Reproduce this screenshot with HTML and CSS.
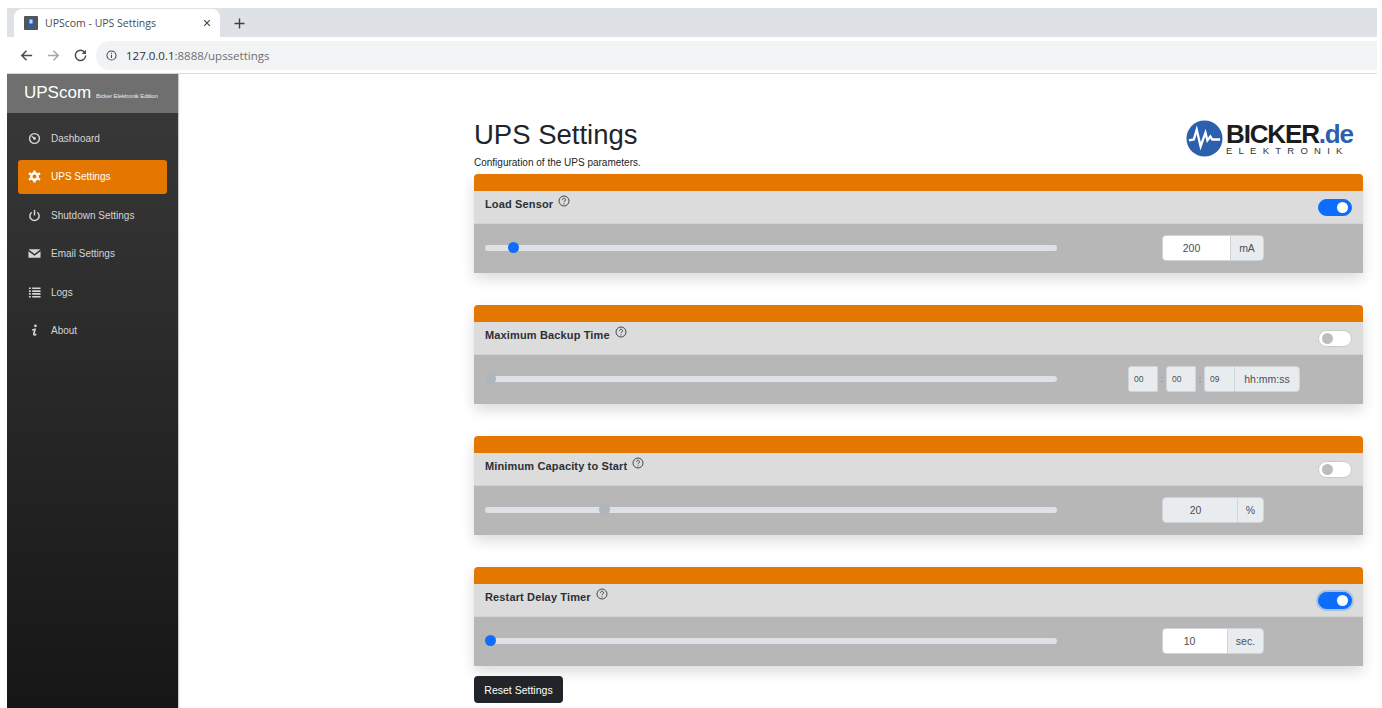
FILE: index.html
```html
<!DOCTYPE html>
<html lang="en">
<head>
<meta charset="utf-8">
<title>UPScom - UPS Settings</title>
<link rel="stylesheet" href="styles.css">
</head>
<body>
<div class="window">
  <div class="tabstrip">
    <div class="tab">
      <svg class="favicon" viewBox="0 0 14 14"><rect width="14" height="14" rx="1" fill="#555"/><rect x="4" y="2" width="6" height="10" rx="1" transform="rotate(8 7 7)" fill="#2a5fa8"/><rect x="5.5" y="3.5" width="3" height="4" fill="#c9d6e6"/></svg>
      <span class="tab-title">UPScom - UPS Settings</span>
      <svg class="tab-close" viewBox="0 0 10 10"><path d="M1.5 1.5l7 7M8.500 1.500l-7 7" stroke="#45484c" stroke-width="1.500" fill="none"/></svg>
    </div>
    <svg class="tab-new" viewBox="0 0 12 12"><path d="M6 .5v11M.5 6h11" stroke="#3c4043" stroke-width="1.500" fill="none"/></svg>
  </div>
  <div class="toolbar">
    <svg class="nav-icon" viewBox="0 0 16 16"><path d="M14 8H3M8 3L3 8l5 5" stroke="#4a4d51" stroke-width="1.600" fill="none"/></svg>
    <svg class="nav-icon" viewBox="0 0 16 16"><path d="M2 8h11M8 3l5 5-5 5" stroke="#a3a6aa" stroke-width="1.600" fill="none"/></svg>
    <svg class="nav-icon" viewBox="0 0 16 16"><path d="M12.800 5.200A5.500 5.500 0 1 0 13.500 8" stroke="#4a4d51" stroke-width="1.600" fill="none"/><path d="M13.800 1.800v4.500H9.300z" fill="#4a4d51"/></svg>
    <div class="omnibox">
      <svg class="info-icon" viewBox="0 0 12 12"><circle cx="6" cy="6" r="5" fill="none" stroke="#45484c" stroke-width="1.100"/><path d="M6 5.200v3.600M6 3v1.200" stroke="#45484c" stroke-width="1.200"/></svg>
      <span class="url"><span class="url-host">127.0.0.1</span>:8888/upssettings</span>
    </div>
  </div>
  <div class="app">
    <nav class="sidebar">
      <div class="brand"><span class="brand-name">UPScom</span><span class="brand-sub">Bicker Elektronik Edition</span></div>
      <ul class="menu">
        <li class="menu-item">
          <svg class="menu-icon" viewBox="0 0 14 14"><circle cx="7" cy="7" r="5.300" fill="none" stroke="currentColor" stroke-width="1.500"/><circle cx="7" cy="7" r="1.500" fill="currentColor"/><path d="M4 4.500l3 2.500" stroke="currentColor" stroke-width="1.300"/></svg>
          Dashboard
        </li>
        <li class="menu-item active">
          <svg class="menu-icon" viewBox="0 0 14 14"><circle cx="7" cy="7" r="3.500" fill="none" stroke="currentColor" stroke-width="2.600"/><g stroke="currentColor" stroke-width="2.400"><path d="M7 .5v2.500M7 11v2.500M1 3.500l2.200 1.300M10.800 9.200L13 10.500M1 10.500l2.200-1.300M10.800 4.800L13 3.500"/></g></svg>
          UPS Settings
        </li>
        <li class="menu-item">
          <svg class="menu-icon" viewBox="0 0 14 14"><path d="M4 3.500a5 5 0 1 0 6 0" fill="none" stroke="currentColor" stroke-width="1.600"/><path d="M7 1v6" stroke="currentColor" stroke-width="1.600"/></svg>
          Shutdown Settings
        </li>
        <li class="menu-item">
          <svg class="menu-icon" viewBox="0 0 14 14"><path d="M.5 2.500h13L7 7.500z" fill="currentColor"/><path d="M.5 4.500L7 9.500l6.500-5v7H.5z" fill="currentColor"/></svg>
          Email Settings
        </li>
        <li class="menu-item">
          <svg class="menu-icon" viewBox="0 0 14 14"><path d="M1 2.500h2M4.500 2.500h9M1 5.500h2M4.500 5.500h9M1 8.500h2M4.500 8.500h9M1 11.500h2M4.500 11.500h9" stroke="currentColor" stroke-width="1.700"/></svg>
          Logs
        </li>
        <li class="menu-item">
          <svg class="menu-icon" viewBox="0 0 14 14"><circle cx="8" cy="2" r="1.500" fill="currentColor"/><path d="M4.500 6.500l3-.7-1.200 5c-.2 1 .8 1.200 2.700.2" fill="none" stroke="currentColor" stroke-width="1.800"/></svg>
          About
        </li>
      </ul>
    </nav>
    <main class="content">
      <header class="page-head">
        <div class="page-titles">
          <h1 class="page-title">UPS Settings</h1>
          <p class="page-desc">Configuration of the UPS parameters.</p>
        </div>
        <div class="logo">
          <svg class="logo-mark" viewBox="0 0 38 38"><circle cx="19" cy="19" r="18.500" fill="#2c5fae"/><path d="M3 21l5-1 3-10 4 17 5-14 2 8 3-4 2 3h8" fill="none" stroke="#fff" stroke-width="2.400"/></svg>
          <div class="logo-text">
            <div class="logo-word">BICKER<span class="logo-tld">.de</span></div>
            <div class="logo-sub">ELEKTRONIK</div>
          </div>
        </div>
      </header>

      <section class="card">
        <div class="card-stripe"></div>
        <div class="card-head">
          <span class="card-label">Load Sensor</span>
          <svg class="help" viewBox="0 0 12 12"><circle cx="6" cy="6" r="5" fill="none" stroke="#33383d" stroke-width=".9"/><path d="M4.500 4.700a1.500 1.500 0 1 1 2.300 1.300c-.6.400-.8.600-.8 1.200" fill="none" stroke="#33383d" stroke-width=".9"/><circle cx="6" cy="8.800" r=".6" fill="#33383d"/></svg>
          <span class="switch on"></span>
        </div>
        <div class="card-body">
          <div class="slider"><span class="thumb" style="left:4%"></span></div>
          <div class="field field-load">
            <div class="group">
              <span class="value v-load">200</span><span class="unit">mA</span>
            </div>
          </div>
        </div>
      </section>

      <section class="card">
        <div class="card-stripe"></div>
        <div class="card-head">
          <span class="card-label">Maximum Backup Time</span>
          <svg class="help" viewBox="0 0 12 12"><circle cx="6" cy="6" r="5" fill="none" stroke="#33383d" stroke-width=".9"/><path d="M4.500 4.700a1.500 1.500 0 1 1 2.300 1.300c-.6.400-.8.600-.8 1.200" fill="none" stroke="#33383d" stroke-width=".9"/><circle cx="6" cy="8.800" r=".6" fill="#33383d"/></svg>
          <span class="switch"></span>
        </div>
        <div class="card-body off">
          <div class="slider"><span class="thumb" style="left:0"></span></div>
          <div class="field field-time">
            <span class="time-cell">00</span><span class="colon">:</span><span class="time-cell">00</span><span class="colon">:</span><span class="time-cell last">09</span><span class="unit time-unit">hh:mm:ss</span>
          </div>
        </div>
      </section>

      <section class="card">
        <div class="card-stripe"></div>
        <div class="card-head">
          <span class="card-label">Minimum Capacity to Start</span>
          <svg class="help" viewBox="0 0 12 12"><circle cx="6" cy="6" r="5" fill="none" stroke="#33383d" stroke-width=".9"/><path d="M4.500 4.700a1.500 1.500 0 1 1 2.300 1.300c-.6.400-.8.600-.8 1.200" fill="none" stroke="#33383d" stroke-width=".9"/><circle cx="6" cy="8.800" r=".6" fill="#33383d"/></svg>
          <span class="switch"></span>
        </div>
        <div class="card-body off">
          <div class="slider"><span class="thumb" style="left:20%"></span></div>
          <div class="field field-load">
            <div class="group">
              <span class="value v-cap">20</span><span class="unit">%</span>
            </div>
          </div>
        </div>
      </section>

      <section class="card">
        <div class="card-stripe"></div>
        <div class="card-head">
          <span class="card-label">Restart Delay Timer</span>
          <svg class="help" viewBox="0 0 12 12"><circle cx="6" cy="6" r="5" fill="none" stroke="#33383d" stroke-width=".9"/><path d="M4.500 4.700a1.500 1.500 0 1 1 2.300 1.300c-.6.400-.8.600-.8 1.200" fill="none" stroke="#33383d" stroke-width=".9"/><circle cx="6" cy="8.800" r=".6" fill="#33383d"/></svg>
          <span class="switch on focus"></span>
        </div>
        <div class="card-body">
          <div class="slider"><span class="thumb" style="left:0"></span></div>
          <div class="field field-load">
            <div class="group">
              <span class="value v-delay">10</span><span class="unit">sec.</span>
            </div>
          </div>
        </div>
      </section>

      <button class="reset" type="button">Reset Settings</button>
    </main>
  </div>
</div>
</body>
</html>
```
FILE: styles.css
```css
* { box-sizing: border-box; }

html, body { height: 100%; }

body {
  margin: 0;
  background: #fff;
  overflow: hidden;
  font-family: "Liberation Sans", Arial, sans-serif;
  color: #212529;
}

.window {
  height: 708px;
  margin: 0 5px 0 7px;
  padding-top: 8px;
  display: flex;
  flex-direction: column;
}

/* Browser tab strip */
.tabstrip {
  height: 29px;
  flex: none;
  display: flex;
  align-items: flex-end;
  background: #dee1e6;
}

.tab {
  width: 206px;
  height: 28px;
  margin-left: 7px;
  padding: 0 0 1px 10px;
  display: flex;
  align-items: center;
  background: #fff;
  border-radius: 8px 8px 0 0;
}

.favicon { width: 14px; height: 14px; margin-right: 7px; }

.tab-title {
  flex: 1;
  font: 10.500px "Open Sans", "Liberation Sans", sans-serif;
  color: #4a4d52;
}

.tab-close { width: 8px; height: 8px; margin-right: 9px; }

.tab-new { width: 11px; height: 11px; margin: 0 0 8px 14px; }

/* Address bar */
.toolbar {
  height: 37px;
  flex: none;
  padding-left: 12px;
  display: flex;
  align-items: center;
  background: #fff;
  border-bottom: 1px solid #dadce0;
}

.nav-icon { width: 15px; height: 15px; margin-right: 12px; }

.omnibox {
  flex: 1;
  height: 29px;
  margin: 0 0 0 -4px;
  padding-left: 10px;
  display: flex;
  align-items: center;
  background: #f1f3f4;
  border-radius: 14px 0 0 14px;
}

.info-icon { width: 11px; height: 11px; margin-right: 9px; }

.url { font: 11.500px "Open Sans", "Liberation Sans", sans-serif; color: #6d7175; }

.url-host { color: #2e3033; }

/* Application frame */
.app {
  flex: 1;
  min-height: 0;
  display: flex;
}

.sidebar {
  width: 171px;
  flex: none;
  background: linear-gradient(#3a3a3a, #161616);
  box-shadow: 1px 0 1px rgba(0, 0, 0, .2);
}

.brand {
  height: 39px;
  padding: 0 0 1px 17px;
  display: flex;
  align-items: center;
  background: #6f6f6f;
  color: #fff;
}

.brand-name { font-size: 17px; }

.brand-sub {
  margin: 5px 0 0 5px;
  font-size: 6px;
  letter-spacing: -.12px;
  color: #ececec;
}

.menu {
  list-style: none;
  margin: 0;
  padding: 8px 11px 0;
}

.menu-item {
  height: 34px;
  margin-bottom: 4.500px;
  padding-left: 10px;
  display: flex;
  align-items: center;
  border-radius: 3px;
  font-size: 10px;
  color: #d3d5d7;
}

.menu-item.active {
  background: #e47700;
  color: #fff;
}

.menu-icon {
  width: 13px;
  height: 13px;
  margin-right: 10px;
  flex: none;
}

/* Page content */
.content {
  flex: 1;
  min-width: 0;
  padding: 35px 14px 0 296px;
  display: flex;
  flex-direction: column;
}

.page-head {
  height: 65px;
  flex: none;
  display: flex;
  justify-content: space-between;
}

.page-title {
  margin: 10px 0 0;
  font-size: 27.500px;
  line-height: 32px;
  font-weight: 400;
}

.page-desc {
  margin: 6px 0 0;
  font-size: 10px;
  line-height: 12px;
}

.logo {
  width: 177px;
  height: 38px;
  margin-top: 10px;
  display: flex;
  align-items: center;
  gap: 3px;
}

.logo-mark { width: 37px; height: 37px; flex: none; }

.logo-text { flex: 1; }

.logo-word {
  font-size: 26px;
  line-height: 26px;
  font-weight: 700;
  letter-spacing: -1.150px;
  color: #1c1c1c;
}

.logo-tld { color: #2c5fae; }

.logo-sub {
  margin-top: -1px;
  font-size: 9.500px;
  line-height: 10px;
  letter-spacing: 6.250px;
  white-space: nowrap;
  color: #333;
}

/* Setting cards */
.card {
  height: 99px;
  flex: none;
  margin-bottom: 32px;
  border-radius: 4px 4px 0 0;
  box-shadow: 0 6px 14px rgba(0, 0, 0, .14);
}

.card:nth-of-type(4) { margin-bottom: 10px; }

.card-stripe {
  height: 17px;
  background: #e47700;
  border-radius: 4px 4px 0 0;
}

.card-head {
  height: 33px;
  padding: 0 11px;
  position: relative;
  display: flex;
  align-items: flex-start;
  background: #dcdcdc;
  border-bottom: 1px solid #d2d2d2;
}

.card-label {
  margin-top: 7px;
  font-size: 11px;
  line-height: 13px;
  font-weight: 700;
  letter-spacing: .14px;
  color: #2b3035;
}

.help {
  width: 12px;
  height: 12px;
  margin: 4px 0 0 5px;
}

.switch {
  width: 34px;
  height: 17px;
  margin: 8px 0 0 auto;
  position: relative;
  border-radius: 9px;
  background: #fff;
  border: 1px solid #c9c9c9;
}

.switch::after {
  content: "";
  position: absolute;
  left: 3px;
  top: 2px;
  width: 11px;
  height: 11px;
  border-radius: 50%;
  background: #bdbdbd;
}

.switch.on {
  background: #0d6efd;
  border-color: #0d6efd;
}

.switch.on::after {
  left: auto;
  right: 3px;
  background: #fff;
}

.switch.focus { box-shadow: 0 0 0 2px rgba(13, 110, 253, .25); }

.card-body {
  height: 49px;
  padding: 0 0 0 11px;
  display: flex;
  align-items: center;
  background: #b7b7b7;
}

.slider {
  width: 572px;
  height: 6px;
  margin-top: -2px;
  flex: none;
  position: relative;
  background: #dee2e6;
  border-radius: 3px;
}

.thumb {
  position: absolute;
  top: -2.500px;
  width: 11px;
  height: 11px;
  border-radius: 50%;
  background: #0d6efd;
}

.card-body.off .thumb { background: #adb5bd; }

.field {
  display: flex;
  align-items: center;
  margin-top: -1px;
  font-size: 10.500px;
}

.field-load { margin-left: 105px; }

.field-time { margin-left: 71px; }

.group {
  width: 102px;
  height: 26px;
  display: flex;
  border-radius: 4px;
  overflow: hidden;
  border: 1px solid #ced4da;
}

.value {
  display: flex;
  align-items: center;
  justify-content: center;
  background: #fff;
  font-size: 10.500px;
  color: #495057;
}

.v-load { width: 67px; padding-right: 10px; }

.v-cap { width: 74px; background: #e9ecef; padding-right: 9px; }

.v-delay { width: 64px; padding-right: 11px; }

.unit {
  flex: 1;
  display: flex;
  align-items: center;
  justify-content: center;
  background: #e9ecef;
  border-left: 1px solid #ced4da;
  color: #495057;
}

.time-cell {
  width: 30px;
  height: 26px;
  display: flex;
  align-items: center;
  padding-left: 5px;
  background: #e9ecef;
  border: 1px solid #ced4da;
  border-radius: 3px 0 0 3px;
  font-size: 8.500px;
  color: #495057;
}

.time-cell.last { border-right: 0; }

.colon {
  width: 8px;
  text-align: center;
  font-size: 9px;
  color: #777;
}

.time-unit {
  width: 66px;
  height: 26px;
  flex: none;
  border: 1px solid #ced4da;
  border-radius: 0 4px 4px 0;
}

.reset {
  width: 89px;
  height: 27px;
  flex: none;
  padding: 0;
  border: 0;
  border-radius: 4px;
  background: #212529;
  color: #fff;
  font: 10.500px "Liberation Sans", Arial, sans-serif;
}
```
